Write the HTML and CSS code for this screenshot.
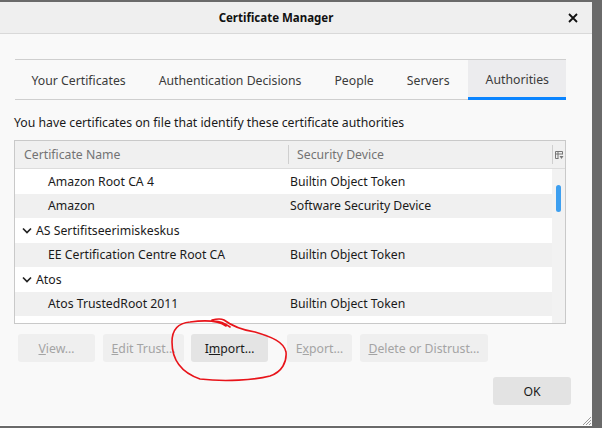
FILE: index.html
```html
<!DOCTYPE html>
<html>
<head>
<meta charset="utf-8">
<link rel="stylesheet" href="styles.css">
</head>
<body>
<div class="dialog">
  <div class="titlebar">
    <div class="title">Certificate Manager</div>
    <div class="close">
      <svg width="10" height="10" viewBox="0 0 10 10"><path d="M1 1 L9 9 M9 1 L1 9" stroke="#111" stroke-width="1.8" fill="none"/></svg>
    </div>
  </div>
  <div class="content">
    <div class="tabs">
      <div class="tab">Your Certificates</div>
      <div class="tab">Authentication Decisions</div>
      <div class="tab">People</div>
      <div class="tab">Servers</div>
      <div class="tab active">Authorities</div>
    </div>
    <div class="desc">You have certificates on file that identify these certificate authorities</div>
    <div class="tree">
      <div class="thead">
        <div class="hcell c1">Certificate Name</div>
        <div class="hcell c2">Security Device</div>
        <div class="picker">
          <svg width="9" height="9" viewBox="0 0 9 9"><path d="M0.5 0.5 H7.5 V3.5 M0.5 0.5 V7.5 H3.5 M0.5 3 H7.5 M3 0.5 V7.5" stroke="#777" stroke-width="1" fill="none"/><path d="M4.5 5 L8.5 5 L6.5 8 Z" fill="#777"/></svg>
        </div>
      </div>
      <div class="tbody">
        <div class="rows">
          <div class="row"><div class="cell c1 child">Amazon Root CA 4</div><div class="cell c2">Builtin Object Token</div></div>
          <div class="row alt"><div class="cell c1 child">Amazon</div><div class="cell c2">Software Security Device</div></div>
          <div class="row"><div class="cell c1 group"><svg class="chev" width="10" height="7" viewBox="0 0 10 7"><path d="M1 1.5 L5 5.5 L9 1.5" stroke="#222" stroke-width="1.7" fill="none"/></svg>AS Sertifitseerimiskeskus</div><div class="cell c2"></div></div>
          <div class="row alt"><div class="cell c1 child">EE Certification Centre Root CA</div><div class="cell c2">Builtin Object Token</div></div>
          <div class="row"><div class="cell c1 group"><svg class="chev" width="10" height="7" viewBox="0 0 10 7"><path d="M1 1.5 L5 5.5 L9 1.5" stroke="#222" stroke-width="1.7" fill="none"/></svg>Atos</div><div class="cell c2"></div></div>
          <div class="row alt"><div class="cell c1 child">Atos TrustedRoot 2011</div><div class="cell c2">Builtin Object Token</div></div>
          <div class="row"><div class="cell c1 child">Autoridad de Certificacion Firmaprofesional</div><div class="cell c2"></div></div>
        </div>
        <div class="scrollbar"><div class="thumb"></div></div>
      </div>
    </div>
    <div class="buttons">
      <button class="btn dis b-view"><u>V</u>iew…</button>
      <button class="btn dis b-edit"><u>E</u>dit Trust…</button>
      <button class="btn b-import">I<u>m</u>port…</button>
      <button class="btn dis b-export">E<u>x</u>port…</button>
      <button class="btn dis b-delete"><u>D</u>elete or Distrust…</button>
    </div>
    <div class="footer">
      <button class="btn ok">OK</button>
    </div>
  </div>
  <div class="grip">
    <svg width="12" height="12" viewBox="0 0 12 12"><path d="M11 3 L3 11 M11 6 L6 11 M11 9 L9 11" stroke="#9a9a9a" stroke-width="1" fill="none"/></svg>
  </div>
  <svg class="scribble" width="602" height="428" viewBox="0 0 602 428"><path d="M226 326 C218 320 205 320 190 322 C178 323 172 330 172 342 C172 358 180 372 200 379 C225 382 255 380 270 376 C282 372 287 362 286 352 C284 342 272 337 255 332 C242 330 232 326 224 320 C220 318 216 319 212 320 M214 321 C220 321 226 324 230 327" stroke="#e8141a" stroke-width="1.6" fill="none" stroke-linecap="round"/></svg>
</div>
</body>
</html>
```

FILE: styles.css
```css
html, body {
  margin: 0;
  padding: 0;
}
body {
  background: #6a6a6a;
  width: 602px;
  height: 428px;
  overflow: hidden;
  font-family: "Noto Sans", "Open Sans", sans-serif;
  font-size: 12.25px;
  color: #1a1a1a;
}
.dialog {
  position: relative;
  margin-top: 2px;
  width: 592px;
  height: 423px;
  background: #f9f9f9;
  border-bottom: 1px solid #ffffff;
  display: flex;
  flex-direction: column;
}
.titlebar {
  height: 31px;
  background: #efefef;
  border-bottom: 1px solid #d9d9d9;
  display: flex;
  align-items: center;
  flex: none;
}
.title {
  flex: 1;
  text-align: center;
  font-weight: bold;
  font-size: 11.5px;
  color: #111;
}
.close {
  width: 38px;
  display: flex;
  justify-content: center;
  padding-left: 2px;
}
.content {
  flex: 1;
  display: flex;
  flex-direction: column;
}
.tabs {
  margin: 25px 26px 0 15px;
  height: 39px;
  border-top: 1px solid #cfcfcf;
  border-bottom: 1px solid #cfcfcf;
  display: flex;
  flex: none;
}
.tab {
  padding: 0 16.5px;
  display: flex;
  align-items: center;
  color: #3b3b3b;
  padding-top: 1px;
}
.tab.active {
  margin-left: auto;
  padding: 0 17px 0 18px;
  background: #ececee;
  border-bottom: 3px solid #0a84ff;
  margin-bottom: -1px;
  padding-top: 2px;
}
.desc {
  margin: 14px 0 0 14px;
  height: 18px;
  line-height: 18px;
  color: #1a1a1a;
  flex: none;
}
.tree {
  margin: 8px 26px 0 14px;
  height: 182px;
  border: 1px solid #c9c9c9;
  display: flex;
  flex-direction: column;
  background: #fff;
  flex: none;
}
.thead {
  height: 27px;
  background: #f0f0f0;
  border-bottom: 1px solid #dcdcdc;
  display: flex;
  align-items: center;
  color: #737373;
  flex: none;
}
.hcell.c1 {
  width: 264px;
  padding-left: 9px;
  border-right: 1px solid #cfcfcf;
  height: 19px;
  line-height: 19px;
}
.hcell.c2 {
  flex: 1;
  padding-left: 8px;
  height: 19px;
  line-height: 19px;
  border-right: 1px solid #cfcfcf;
}
.picker {
  width: 12px;
  display: flex;
  justify-content: center;
  padding-top: 2px;
}
.tbody {
  flex: 1;
  display: flex;
  overflow: hidden;
}
.rows {
  flex: 1;
  overflow: hidden;
}
.row {
  height: 24.5px;
  display: flex;
  align-items: center;
  background: #fff;
  white-space: nowrap;
}
.row.alt {
  background: #f0f0f0;
}
.cell.c1 {
  width: 273px;
  display: flex;
  align-items: center;
  overflow: hidden;
}
.cell.child {
  padding-left: 33px;
  width: 240px;
}
.cell.group {
  padding-left: 7px;
  width: 266px;
}
.chev {
  margin-right: 4px;
  margin-top: 1px;
}
.cell.c2 {
  flex: 1;
  padding-left: 2px;
}
.scrollbar {
  width: 13px;
  background: #f2f2f2;
}
.thumb {
  margin: 16px 0 0 4px;
  width: 5px;
  height: 27px;
  border-radius: 3px;
  background: #3d9ff0;
}
.buttons {
  margin: 10px 0 0 18px;
  display: flex;
  flex: none;
}
.btn {
  font-family: "Noto Sans", "Open Sans", sans-serif;
  font-size: 12.25px;
  height: 28px;
  border: none;
  border-radius: 3px;
  background: #e4e4e4;
  color: #1a1a1a;
  padding: 0;
  margin: 0;
}
.btn.dis {
  background: #efefef;
  color: #a4a4a4;
}
.b-view { width: 77px; }
.b-edit { width: 81px; margin-left: 8px; }
.b-import { width: 77px; margin-left: 7px; }
.b-export { width: 65px; margin-left: 19px; }
.b-delete { width: 128px; margin-left: 8px; }
.footer {
  margin: 15px 21px 0 0;
  display: flex;
  justify-content: flex-end;
  flex: none;
}
.btn.ok {
  width: 78px;
  background: #e3e3e3;
}
.grip {
  position: absolute;
  right: 0;
  bottom: 0;
  width: 12px;
  height: 12px;
}
.scribble {
  position: absolute;
  left: 0;
  top: -2px;
  pointer-events: none;
}
```
